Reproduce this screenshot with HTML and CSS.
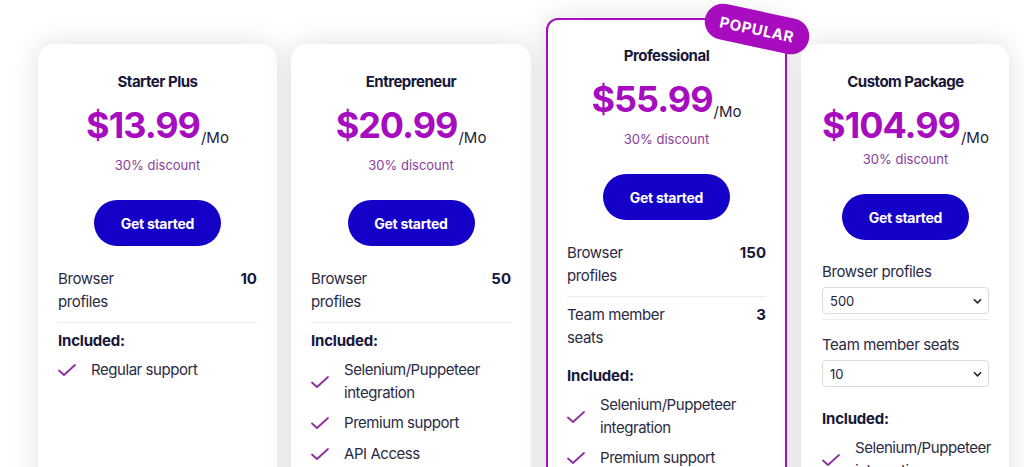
FILE: index.html
```html
<!DOCTYPE html>
<html lang="en">
<head>
<meta charset="utf-8">
<title>Pricing</title>
<link rel="stylesheet" href="styles.css">
</head>
<body>
<div class="plans">
  <div class="card">
    <h3 class="title">Starter Plus</h3>
    <div class="price"><span class="amount">$13.99</span><span class="per">/Mo</span></div>
    <div class="discount">30% discount</div>
    <a class="btn">Get started</a>
    <div class="row divided"><span class="label">Browser profiles</span><span class="value">10</span></div>
    <div class="included">Included:</div>
    <ul class="features">
      <li><svg class="check" viewBox="0 0 18 12"><path d="M1 6.5 L6 11 L17 1"/></svg><span>Regular support</span></li>
    </ul>
  </div>
  <div class="card">
    <h3 class="title">Entrepreneur</h3>
    <div class="price"><span class="amount">$20.99</span><span class="per">/Mo</span></div>
    <div class="discount">30% discount</div>
    <a class="btn">Get started</a>
    <div class="row divided"><span class="label">Browser profiles</span><span class="value">50</span></div>
    <div class="included">Included:</div>
    <ul class="features">
      <li><svg class="check" viewBox="0 0 18 12"><path d="M1 6.5 L6 11 L17 1"/></svg><span>Selenium/Puppeteer integration</span></li>
      <li><svg class="check" viewBox="0 0 18 12"><path d="M1 6.5 L6 11 L17 1"/></svg><span>Premium support</span></li>
      <li><svg class="check" viewBox="0 0 18 12"><path d="M1 6.5 L6 11 L17 1"/></svg><span>API Access</span></li>
    </ul>
  </div>
  <div class="card popular">
    <div class="badge">POPULAR</div>
    <h3 class="title">Professional</h3>
    <div class="price"><span class="amount">$55.99</span><span class="per">/Mo</span></div>
    <div class="discount">30% discount</div>
    <a class="btn">Get started</a>
    <div class="row divided"><span class="label">Browser profiles</span><span class="value">150</span></div>
    <div class="row"><span class="label">Team member seats</span><span class="value">3</span></div>
    <div class="included">Included:</div>
    <ul class="features">
      <li><svg class="check" viewBox="0 0 18 12"><path d="M1 6.5 L6 11 L17 1"/></svg><span>Selenium/Puppeteer integration</span></li>
      <li><svg class="check" viewBox="0 0 18 12"><path d="M1 6.5 L6 11 L17 1"/></svg><span>Premium support</span></li>
      <li><svg class="check" viewBox="0 0 18 12"><path d="M1 6.5 L6 11 L17 1"/></svg><span>API Access</span></li>
    </ul>
  </div>
  <div class="card custom">
    <h3 class="title">Custom Package</h3>
    <div class="price"><span class="amount">$104.99</span><span class="per">/Mo</span></div>
    <div class="discount">30% discount</div>
    <a class="btn">Get started</a>
    <div class="field divided">
      <label class="field-label">Browser profiles</label>
      <div class="select"><span>500</span><svg class="chev" viewBox="0 0 10 6"><path d="M1 1 L5 5 L9 1"/></svg></div>
    </div>
    <div class="field">
      <label class="field-label">Team member seats</label>
      <div class="select"><span>10</span><svg class="chev" viewBox="0 0 10 6"><path d="M1 1 L5 5 L9 1"/></svg></div>
    </div>
    <div class="included">Included:</div>
    <ul class="features">
      <li><svg class="check" viewBox="0 0 18 12"><path d="M1 6.5 L6 11 L17 1"/></svg><span>Selenium/Puppeteer integration</span></li>
      <li><svg class="check" viewBox="0 0 18 12"><path d="M1 6.5 L6 11 L17 1"/></svg><span>Premium support</span></li>
    </ul>
  </div>
</div>
</body>
</html>
```

FILE: styles.css
```css
* { box-sizing: border-box; }
html, body { margin: 0; padding: 0; background: #ffffff; overflow: hidden; }
body {
  font-family: Inter, "Noto Sans", sans-serif;
  color: #2a2a44;
  width: 1024px;
  height: 467px;
}
.plans {
  display: flex;
  align-items: flex-start;
  gap: 14px;
  padding: 44px 0 0 38px;
}
.card {
  position: relative;
  width: 239px;
  height: 520px;
  background: #fff;
  border-radius: 16px;
  box-shadow: 0 0 28px rgba(0, 0, 0, 0.13);
  padding: 28px 20px 0 20px;
  display: flex;
  flex-direction: column;
}
.card:nth-child(2) { width: 240px; }
.card.popular {
  width: 241px;
  margin-top: -26px;
  border: 2px solid #a40fbd;
  border-radius: 12px;
  padding: 26px 19px 0 19px;
  margin-left: 1px;
}
.card.custom { width: 208px; padding: 28px 20px 0 21px; }
.title {
  margin: 0;
  text-align: center;
  font-size: 15px;
  line-height: 20px;
  font-weight: 700;
  letter-spacing: -0.5px;
  color: #17173a;
}
.price {
  margin-top: 11px;
  text-align: center;
  line-height: 44px;
  white-space: nowrap;
}
.amount {
  font-size: 36px;
  font-weight: 700;
  color: #a50dbf;
  letter-spacing: -1px;
}
.per {
  font-size: 15px;
  color: #22223a;
  vertical-align: -5px;
  margin-left: 1px;
}
.discount {
  margin-top: -4px;
  text-align: center;
  font-size: 13px;
  line-height: 18px;
  color: #8a3d9b;
}
.custom .discount { margin-top: -10px; }
.btn {
  align-self: center;
  margin-top: 26px;
  width: 127px;
  height: 46px;
  border-radius: 23px;
  background: #1500c8;
  color: #fff;
  font-size: 14px;
  font-weight: 700;
  letter-spacing: -0.3px;
  display: flex;
  align-items: center;
  justify-content: center;
}
.row {
  margin-top: 22px;
  display: flex;
  justify-content: space-between;
  align-items: flex-start;
  font-size: 15px;
  line-height: 22.5px;
  padding-bottom: 9px;
}
.row + .row { margin-top: 7px; }
.row.divided { border-bottom: 1px solid #ececf0; }
.label { width: 50%; letter-spacing: -0.4px; }
.value { font-weight: 700; color: #17173a; }
.included {
  margin-top: 7px;
  font-size: 15px;
  line-height: 22px;
  font-weight: 700;
  color: #17173a;
  letter-spacing: -0.2px;
}
.features {
  list-style: none;
  margin: 7px 0 0 0;
  padding: 0;
}
.features li {
  display: flex;
  align-items: center;
  gap: 15px;
  font-size: 15px;
  line-height: 22.5px;
  margin-bottom: 8px;
  letter-spacing: -0.45px;
}
.check {
  flex: 0 0 18px;
  width: 18px;
  height: 12px;
  fill: none;
  stroke: #8e2ea0;
  stroke-width: 1.8;
  stroke-linecap: round;
  stroke-linejoin: round;
}
.field { margin-top: 21px; }
.field.divided { border-bottom: 1px solid #ececf0; padding-bottom: 5px; }
.field + .field { margin-top: 14px; }
.field-label {
  display: block;
  font-size: 15px;
  line-height: 22px;
  letter-spacing: -0.4px;
}
.select {
  margin-top: 4px;
  height: 27px;
  border: 1px solid #dadade;
  border-radius: 4px;
  display: flex;
  align-items: center;
  justify-content: space-between;
  padding: 0 6px 0 7px;
  font-size: 13px;
  color: #22223a;
}
.chev {
  width: 9px;
  height: 6px;
  fill: none;
  stroke: #22223a;
  stroke-width: 1.8;
}
.field + .included { margin-top: 21px; }
.badge {
  position: absolute;
  left: 156px;
  top: -9px;
  width: 106px;
  height: 36px;
  border-radius: 18px;
  background: #a80cbf;
  color: #fff;
  font-weight: 700;
  font-size: 15px;
  letter-spacing: 0.6px;
  display: flex;
  align-items: center;
  justify-content: center;
  transform: rotate(12deg);
}
```
